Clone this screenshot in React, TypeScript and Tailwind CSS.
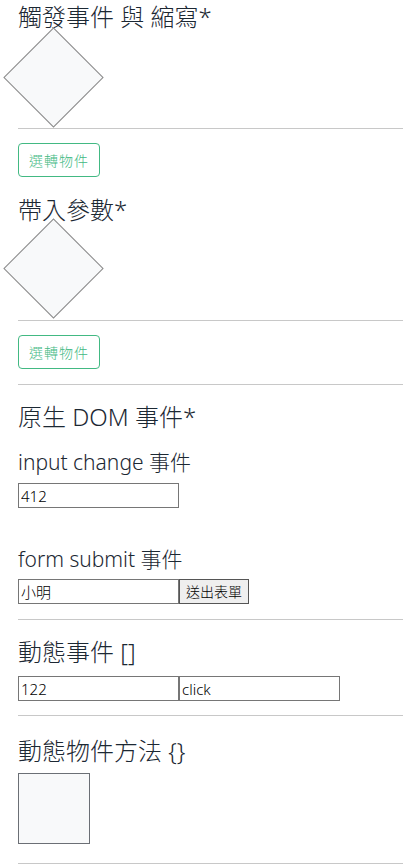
import React from "react";

const font = { fontFamily: '"Noto Sans", "Noto Sans CJK TC", sans-serif' };

function Rule({ className = "" }: { className?: string }) {
  return <div className={`h-px bg-[#c8c8c8] ${className}`} />;
}

function Diamond({ className = "" }: { className?: string }) {
  return (
    <div
      className={`w-[71px] h-[71px] rotate-45 border border-[#8a8a8a] bg-[#f8f9fa] ${className}`}
    />
  );
}

function GreenButton({ className = "" }: { className?: string }) {
  return (
    <button
      className={`h-[34px] w-[82px] rounded-[4px] border border-[#42b983] bg-white text-[14px] font-light tracking-[1px] text-[#42b983] ${className}`}
      style={font}
    >
      選轉物件
    </button>
  );
}

function Field({ value }: { value: string }) {
  return (
    <input
      readOnly
      value={value}
      className="h-[25px] w-[161px] border border-[#767676] bg-white px-[2px] text-[15px] font-light text-black outline-none"
      style={font}
    />
  );
}

export default function App() {
  return (
    <div className="min-h-screen bg-white text-[#1c2833]" style={font}>
      <div className="pl-[18px]">
        {/* 觸發事件 */}
        <h2 className="mt-[2px] text-[24px] font-light leading-[30px]">觸發事件 與 縮寫*</h2>
        <Diamond className="mt-[10px]" />
        <Rule className="mt-[15px]" />
        <GreenButton className="mt-[14px] block" />

        {/* 帶入參數 */}
        <h2 className="mt-[18px] text-[24px] font-light leading-[30px]">帶入參數*</h2>
        <Diamond className="mt-[8px]" />
        <Rule className="mt-[16px]" />
        <GreenButton className="mt-[14px] block" />
        <Rule className="mt-[15px]" />

        {/* 原生 DOM 事件 */}
        <h2 className="mt-[17px] text-[24px] font-light leading-[30px]">原生 DOM 事件*</h2>
        <h3 className="mt-[17px] text-[21px] font-light leading-[26px]">input change 事件</h3>
        <div className="mt-[8px] flex">
          <Field value="412" />
        </div>
        <h3 className="mt-[38px] text-[21px] font-light leading-[26px]">form submit 事件</h3>
        <form className="mt-[7px] flex" onSubmit={(e) => e.preventDefault()}>
          <Field value="小明" />
          <button
            type="submit"
            className="h-[25px] w-[70px] border border-[#555] bg-[#efefef] text-[14px] font-light text-black"
            style={font}
          >
            送出表單
          </button>
        </form>
        <Rule className="mt-[15px]" />

        {/* 動態事件 */}
        <h2 className="mt-[17px] text-[24px] font-light leading-[30px]">動態事件 []</h2>
        <div className="mt-[9px] flex">
          <Field value="122" />
          <Field value="click" />
        </div>
        <Rule className="mt-[14px]" />

        {/* 動態物件方法 */}
        <h2 className="mt-[20px] text-[24px] font-light leading-[30px]">動態物件方法 {"{}"}</h2>
        <div className="mt-[7px] h-[71px] w-[72px] border border-[#6b6f75] bg-[#f8f9fa]" />
        <Rule className="mt-[19px]" />
      </div>
    </div>
  );
}
